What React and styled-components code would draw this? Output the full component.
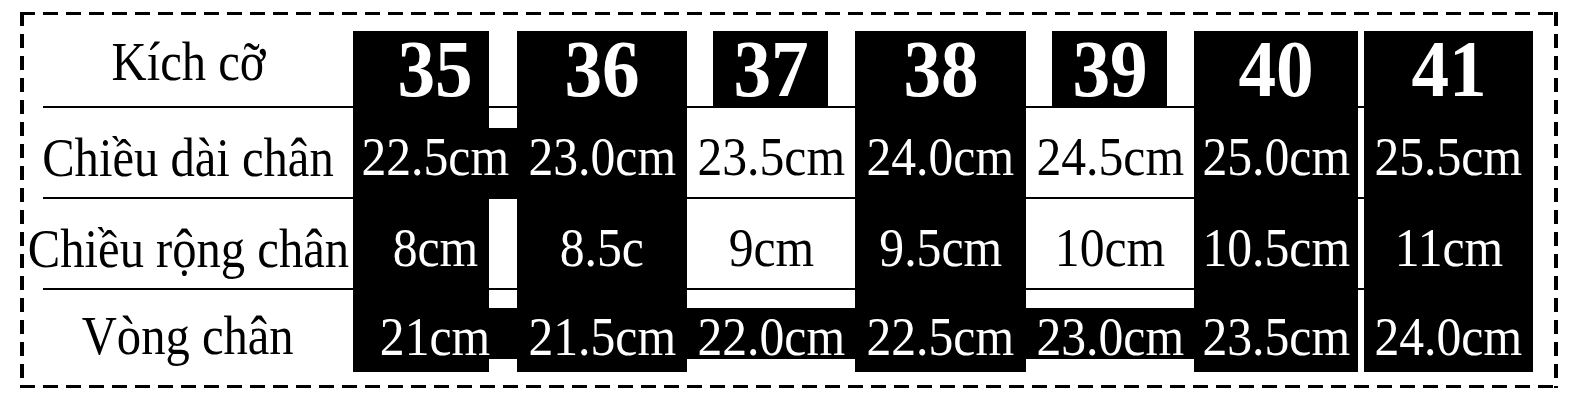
import styled, { createGlobalStyle } from "styled-components";

const GlobalStyle = createGlobalStyle`
  html, body {
    margin: 0;
    padding: 0;
    background: #fff;
  }
  body {
    font-family: "Liberation Serif", "Times New Roman", serif;
  }
`;

const sizes = ["35", "36", "37", "38", "39", "40", "41"];
const lengths = ["22.5cm", "23.0cm", "23.5cm", "24.0cm", "24.5cm", "25.0cm", "25.5cm"];
const widths = ["8cm", "8.5c", "9cm", "9.5cm", "10cm", "10.5cm", "11cm"];
const girths = ["21cm", "21.5cm", "22.0cm", "22.5cm", "23.0cm", "23.5cm", "24.0cm"];

// where each size's text sits in the grid
const spans = ["2 / 4", "4 / 5", "5 / 8", "8 / 9", "9 / 12", "12 / 13", "14 / 15"];
const darkMid = [true, true, false, true, false, true, true];

// black areas of the chart: [column, row]
const fills = [
  ["2 / 3", "1 / 8"],
  ["4 / 5", "1 / 8"],
  ["8 / 9", "1 / 8"],
  ["12 / 13", "1 / 8"],
  ["14 / 15", "1 / 8"],
  ["6 / 7", "1 / 2"],
  ["10 / 11", "1 / 2"],
  ["3 / 4", "3 / 4"],
  ["2 / 13", "6 / 7"],
];

function App() {
  return (
    <>
      <GlobalStyle />
      <Frame>
        <Chart>
          <Rule $row="2" />
          <Rule $row="4" />
          <Rule $row="5" />

          {fills.map(([col, row]) => (
            <Fill key={col + row} $col={col} $row={row} />
          ))}

          <Label $row="1 / 2" $dy={-14}>
            <span>Kích cỡ</span>
          </Label>
          <Label $row="2 / 4" $dy={10}>
            <span>Chiều dài chân</span>
          </Label>
          <Label $row="4 / 5" $dy={10}>
            <span>Chiều rộng chân</span>
          </Label>
          <Label $row="5 / 8" $dy={10}>
            <span>Vòng chân</span>
          </Label>

          {sizes.map((s, i) => (
            <SizeNum key={s} $col={spans[i]}>
              <span>{s}</span>
            </SizeNum>
          ))}
          {lengths.map((v, i) => (
            <Value key={"l" + i} $col={spans[i]} $row="2 / 4" $dark={darkMid[i]} $dy={8}>
              <span>{v}</span>
            </Value>
          ))}
          {widths.map((v, i) => (
            <Value key={"w" + i} $col={spans[i]} $row="4 / 5" $dark={darkMid[i]} $dy={8}>
              <span>{v}</span>
            </Value>
          ))}
          {girths.map((v, i) => (
            <Value key={"g" + i} $col={spans[i]} $row="6 / 7" $dark $dy={6}>
              <span>{v}</span>
            </Value>
          ))}
        </Chart>
      </Frame>
    </>
  );
}

export default App;

const Frame = styled.div`
  box-sizing: border-box;
  width: 1538px;
  height: 376px;
  margin: 12px 0 0 20px;
  padding: 19px 0 0 23px;
  background:
    repeating-linear-gradient(90deg, #000 0 15px, transparent 15px 23px) left top / 100% 3px no-repeat,
    repeating-linear-gradient(90deg, #000 0 15px, transparent 15px 23px) left bottom / 100% 3px no-repeat,
    repeating-linear-gradient(180deg, #000 0 14px, transparent 14px 22px) left top / 4px 100% no-repeat,
    repeating-linear-gradient(180deg, #000 0 14px, transparent 14px 22px) right top / 4px 100% no-repeat;
`;

const Chart = styled.div`
  display: grid;
  grid-template-columns: 310px 136px 28px 170px 26px 115px 27px 171px 26px 115px 27px 164px 6px 169px;
  grid-template-rows: 76px 21px 70px 91px 19px 51px 13px;
  width: 1490px;
`;

const Rule = styled.div`
  grid-column: 1 / 14;
  grid-row: ${(p) => p.$row};
  align-self: start;
  height: 2px;
  margin-top: -1px;
  background: #000;
`;

const Fill = styled.div`
  grid-column: ${(p) => p.$col};
  grid-row: ${(p) => p.$row};
  background: #000;
  z-index: 1;
`;

const Label = styled.div`
  grid-column: 1 / 2;
  grid-row: ${(p) => p.$row};
  display: flex;
  align-items: center;
  justify-content: center;
  padding: ${(p) => (p.$dy > 0 ? p.$dy : 0)}px 20px ${(p) => (p.$dy < 0 ? -p.$dy : 0)}px 0;
  font-size: 54px;
  line-height: 1;
  white-space: nowrap;
  color: #000;
  z-index: 2;

  span {
    display: inline-block;
    transform: scaleX(0.9);
  }
`;

const SizeNum = styled.div`
  grid-column: ${(p) => p.$col};
  grid-row: 1 / 2;
  display: flex;
  align-items: center;
  justify-content: center;
  font-size: 80px;
  font-weight: bold;
  line-height: 1;
  color: #fff;
  z-index: 2;

  span {
    display: inline-block;
    transform: scaleX(0.94);
  }
`;

const Value = styled.div`
  grid-column: ${(p) => p.$col};
  grid-row: ${(p) => p.$row};
  display: flex;
  align-items: center;
  justify-content: center;
  padding-top: ${(p) => p.$dy || 0}px;
  font-size: 54px;
  line-height: 1;
  white-space: nowrap;
  color: ${(p) => (p.$dark ? "#fff" : "#000")};
  z-index: 2;

  span {
    display: inline-block;
    transform: scaleX(0.92);
  }
`;
